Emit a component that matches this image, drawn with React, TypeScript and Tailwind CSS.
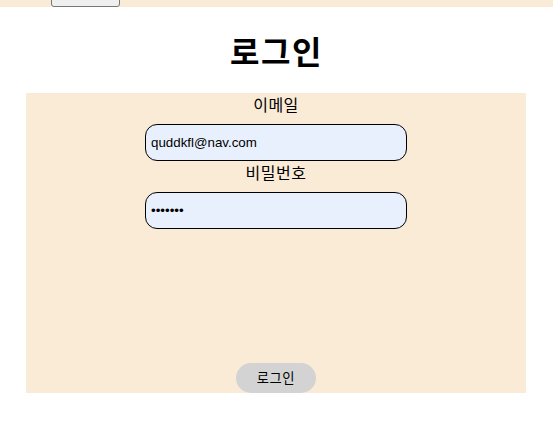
import React, { useState } from 'react';

const cjk = 'font-["Noto_Sans_CJK_KR","Noto_Sans",sans-serif]';

const LoginForm: React.FC = () => {
    const [email, setEmail] = useState('quddkfl@nav.com');
    const [password, setPassword] = useState('1234567');

    return (
        <form
            onSubmit={(e) => e.preventDefault()}
            className="ml-[26px] flex h-[300px] w-[500px] flex-col items-center bg-[#faebd7]"
        >
            <label className={`${cjk} text-[16px] leading-[23px] tracking-[0.5px] text-black`}>이메일</label>
            <input
                type="email"
                value={email}
                onChange={(e) => setEmail(e.target.value)}
                className='mt-[8px] h-[37px] w-[262px] rounded-[12px] border border-black bg-[#e8f0fe] pl-[5px] font-["Liberation_Sans",Arial,sans-serif] text-[13.33px] text-black outline-none'
            />
            <label className={`${cjk} text-[16px] leading-[23px] tracking-[0.5px] text-black`}>비밀번호</label>
            <input
                type="password"
                value={password}
                onChange={(e) => setPassword(e.target.value)}
                className='mt-[8px] h-[37px] w-[262px] rounded-[12px] border border-black bg-[#e8f0fe] pl-[5px] font-["Liberation_Sans",Arial,sans-serif] text-[13.33px] text-black outline-none'
            />
            <button
                type="submit"
                className={`${cjk} mt-auto h-[30px] w-[80px] rounded-full bg-[#d3d3d3] text-[13.33px] tracking-[0.5px] text-black`}
            >
                로그인
            </button>
        </form>
    );
}

export default function App() {
    return (
        <div className="min-h-[427px] bg-white">
            <div className="flex h-[7px] items-end overflow-hidden bg-[#faebd7]">
                <button className="ml-[51px] h-[30px] w-[69px] shrink-0 rounded-[3px] border border-[#767676] bg-[#efefef]" />
            </div>
            <h1 className={`${cjk} my-[20px] text-center text-[32px] font-bold leading-[46px] tracking-[1.5px] text-black`}>로그인</h1>
            <LoginForm />
        </div>
    );
}
